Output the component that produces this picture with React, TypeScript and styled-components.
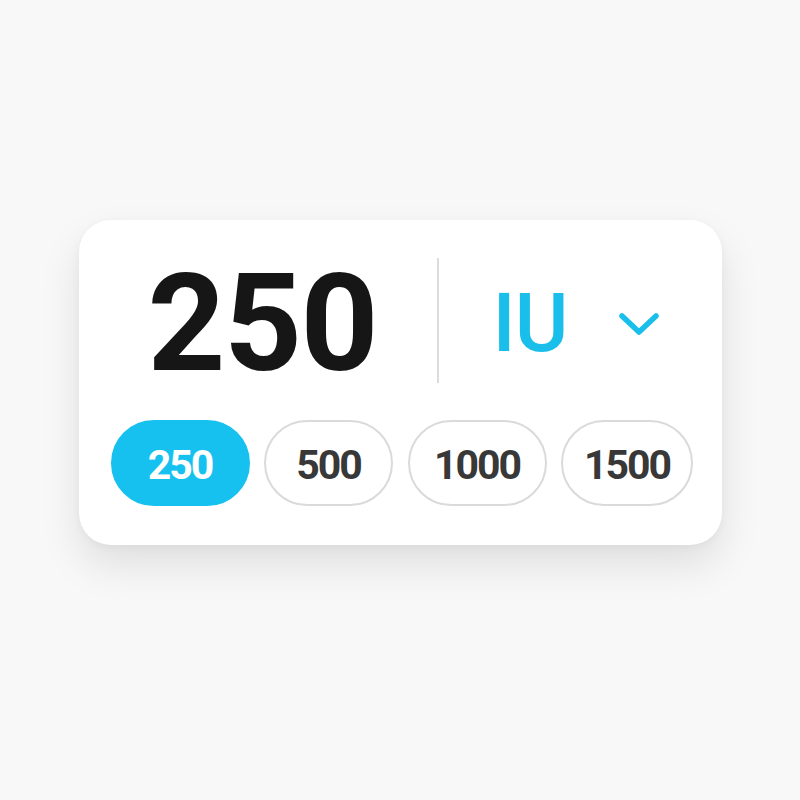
import React, { useState } from "react";
import styled, { createGlobalStyle } from "styled-components";

const presets = [250, 500, 1000, 1500];

const GlobalStyle = createGlobalStyle`
  html, body {
    margin: 0;
    padding: 0;
    background: #f8f8f8;
    font-family: Roboto, "Noto Sans", Arial, sans-serif;
  }
`;

const App = () => {
  const [dose, setDose] = useState(250);

  return (
    <>
      <GlobalStyle />
      <SPage>
        <SCard>
          <STopRow>
            <SValueCell>
              <SValue>{dose}</SValue>
            </SValueCell>
            <SDivider />
            <SUnitButton type="button">
              <SUnit>IU</SUnit>
              <SChevron width="44" height="28" viewBox="0 0 44 28" fill="none">
                <polyline
                  points="5,6 22,22 39,6"
                  stroke="#19bfea"
                  strokeWidth="5.5"
                  strokeLinecap="round"
                  strokeLinejoin="round"
                />
              </SChevron>
            </SUnitButton>
          </STopRow>
          <SChipRow>
            {presets.map((p) => (
              <SChip key={p} active={p === dose} onClick={() => setDose(p)}>
                {p}
              </SChip>
            ))}
          </SChipRow>
        </SCard>
      </SPage>
    </>
  );
};

const SPage = styled.div`
  width: 800px;
  height: 800px;
  display: flex;
  align-items: center;
  justify-content: center;
`;

const SCard = styled.div`
  box-sizing: border-box;
  width: 643px;
  height: 325px;
  margin-top: -35px;
  padding: 38px 28px 39px 32px;
  background: #ffffff;
  border-radius: 32px;
  box-shadow: 0 20px 40px rgba(0, 0, 0, 0.1), 0 2px 8px rgba(0, 0, 0, 0.04);
  display: flex;
  flex-direction: column;
  gap: 37px;
`;

const STopRow = styled.div`
  display: flex;
  align-items: center;
  height: 125px;
`;

const SValueCell = styled.div`
  width: 326px;
  padding-left: 37px;
  box-sizing: border-box;
`;

const SValue = styled.span`
  font-size: 136px;
  font-weight: 700;
  color: #161616;
  line-height: 1;
  letter-spacing: -1.5px;
  display: block;
  margin-top: 6px;
`;

const SDivider = styled.div`
  width: 2px;
  height: 125px;
  background: #dcdcdc;
`;

const SUnitButton = styled.button`
  display: flex;
  align-items: center;
  gap: 50px;
  margin-left: 54px;
  padding: 0;
  border: none;
  background: none;
  cursor: pointer;
`;

const SUnit = styled.span`
  font-family: Roboto, sans-serif;
  font-size: 82px;
  font-weight: 500;
  color: #19bfea;
  line-height: 1;
  letter-spacing: -1px;
  margin-top: 4px;
`;

const SChevron = styled.svg`
  margin-top: 6px;
`;

const SChipRow = styled.div`
  display: grid;
  grid-template-columns: 139px 129px 139px 132px;
  gap: 14.5px;
  height: 86px;
`;

const SChip = styled.button<{ active: boolean }>`
  box-sizing: border-box;
  height: 86px;
  border-radius: 43px;
  border: 2px solid ${(p) => (p.active ? "#16c1ef" : "#dadada")};
  background: ${(p) => (p.active ? "#16c1ef" : "#ffffff")};
  color: ${(p) => (p.active ? "#ffffff" : "#383838")};
  font-family: Roboto, sans-serif;
  font-size: 41px;
  font-weight: 700;
  letter-spacing: -2px;
  padding: 4px 0 0;
  cursor: pointer;
`;

export default App;
